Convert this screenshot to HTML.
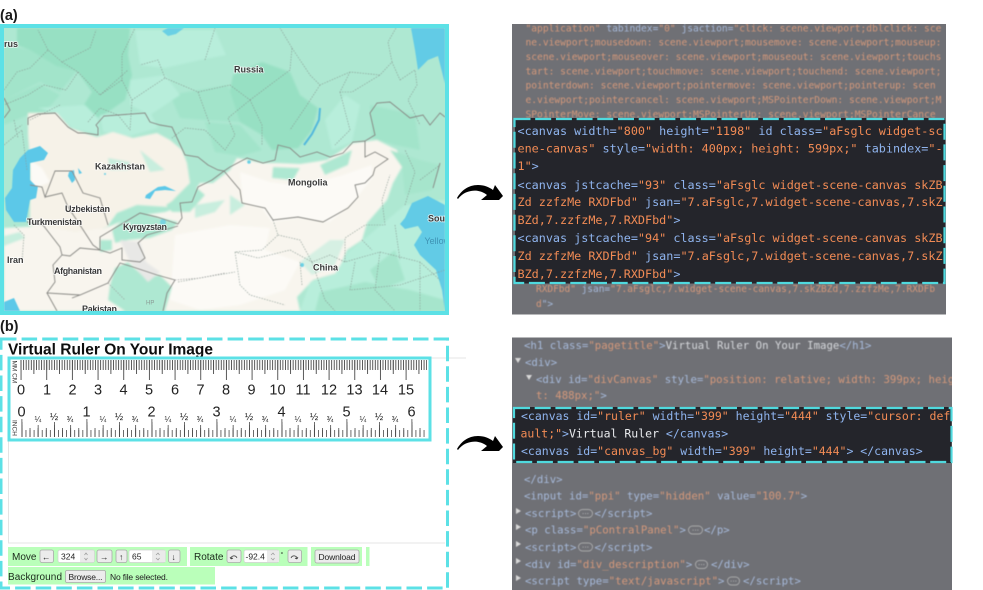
<!DOCTYPE html>
<html><head><meta charset="utf-8"><style>
html,body{margin:0;padding:0;background:#fff;width:983px;height:590px;overflow:hidden}
svg{display:block;position:absolute;left:0;top:0}
text{white-space:pre}
.m{font:bold 9px "Liberation Sans",sans-serif;fill:#3a3a3a;stroke:#fff;stroke-width:1.6px;paint-order:stroke;stroke-opacity:.75}
.d{font-family:"DejaVu Sans Mono","Liberation Mono",monospace;font-size:11.78px;fill:#f28b54}
.e{font-family:"DejaVu Sans Mono","Liberation Mono",monospace;font-size:11.5px;fill:#f28b54}
.f{font-family:"DejaVu Sans Mono","Liberation Mono",monospace;font-size:9.6px;fill:#d4987a}
.g{font-family:"DejaVu Sans Mono","Liberation Mono",monospace;font-size:10.7px;fill:#d4987a}
.b{fill:#8fb4ee}.c{fill:#a6b9da}.w{fill:#e8eaed}.h{fill:#d6d8dc}
.r{font:14.5px "Liberation Sans",sans-serif;fill:#222;text-anchor:middle}
.i{font:14.5px "Liberation Sans",sans-serif;fill:#222;text-anchor:middle}
.u{font:8px "Liberation Sans",sans-serif;fill:#222;text-anchor:middle}
.t{font:10px "Liberation Sans",sans-serif;fill:#1c2a1c}
.s{font:8.5px "Liberation Sans",sans-serif;fill:#222}
.bt{fill:#ececec;stroke:#a9a9a9;stroke-width:.8}
.ip{fill:#fff;stroke:#cfcfcf;stroke-width:.7}
.sp{fill:#eaeaea}
</style></head><body>
<svg width="983" height="590" viewBox="0 0 983 590" xmlns="http://www.w3.org/2000/svg">
<defs><clipPath id="mc"><rect x="4" y="28" width="441" height="283"/></clipPath>
<clipPath id="pb"><rect x="512" y="337" width="440" height="253"/></clipPath>
<clipPath id="pa"><rect x="512" y="24" width="434" height="291"/></clipPath>
<filter id="bl" filterUnits="userSpaceOnUse" x="0" y="0" width="983" height="590"><feGaussianBlur stdDeviation="0.35"/></filter>
<filter id="bn" filterUnits="userSpaceOnUse" x="0" y="0" width="983" height="590"><feGaussianBlur stdDeviation="0.5"/></filter>
<filter id="bm" filterUnits="userSpaceOnUse" x="0" y="0" width="983" height="590"><feGaussianBlur stdDeviation="1.1"/></filter></defs>
<rect width="983" height="590" fill="#fff"/>

<text x="0" y="20" font-family="Liberation Sans,sans-serif" font-weight="bold" font-size="14.5" fill="#1a1a1a">(a)</text>
<text x="0" y="331" font-family="Liberation Sans,sans-serif" font-weight="bold" font-size="14.5" fill="#1a1a1a">(b)</text>

<!-- MAP -->
<g clip-path="url(#mc)">
<rect x="4" y="28" width="441" height="283" fill="#aee8d2"/>
<g filter="url(#bm)">
<!-- north shading -->
<path fill="#97e0c3" d="M17 28H130L128 55 132 75 125 100 108 112 84 125 82 108 92 92 78 72 56 66 30 50 17 45Z"/>
<path fill="#a2e4ca" d="M4 45 30 50 56 66 76 72 60 92 40 82 20 92 4 100Z"/>
<path fill="#97e0c3" d="M233 75 262 62 290 72 300 95 318 108 312 130 298 148 272 150 262 135 240 122 228 100Z"/>
<path fill="#a2e4ca" d="M205 122 240 125 262 150 240 156 215 152Z"/>
<path fill="#a2e4ca" d="M170 95 228 85 240 122 205 120 180 118Z"/>
<path fill="#a2e4ca" d="M4 100 40 84 60 95 45 112 28 115 4 125Z"/>
<path fill="#b8eedb" d="M135 30 215 30 226 55 200 60 165 68 140 65Z"/>
<path fill="#b8eedb" d="M130 80 165 75 180 95 150 115 130 105Z"/>
<path fill="#a2e4ca" d="M370 105 415 115 420 150 395 145 372 138Z"/>
<path fill="#b8eedb" d="M38 108 85 105 98 118 100 135 72 128 57 113Z"/>
<path fill="#b8eedb" d="M100 115 150 112 158 128 130 136 103 132Z"/>
<path fill="#b8eedb" d="M325 120 345 95 360 105 352 142 332 150Z"/>
<!-- cream: Kazakhstan + south + China/Mongolia -->
<path fill="#f6f2e8" d="M28 113 57 113 70 128 97 137 113 132 133 138 157 133 170 140 182 150 187 163 190 183 173 200 167 207 137 205 117 213 107 227 80 235 50 228 30 226 30 160 28 135Z"/>
<path fill="#f8f5ee" d="M4 228 40 226 75 232 105 228 135 216 165 212 185 205 200 183 213 183 230 170 237 158 263 163 277 163 300 164 327 160 353 143 377 140 397 150 402 167 393 183 387 200 367 223 362 240 347 250 337 273 313 280 297 297 300 311H4Z"/>
<path fill="#fcfaf6" d="M240 172 270 182 300 186 340 176 372 165 372 178 355 200 330 222 298 218 272 222 262 208 243 202Z"/>
<path fill="#fcfaf6" d="M30 160 42 168 50 182 32 190Z"/>
<path fill="#fcfaf6" d="M175 235 230 225 270 228 265 250 300 262 285 290 240 305 200 310 170 300Z"/>
<!-- green streaks inside cream -->
<path fill="#aee8d2" d="M166 205 186 192 197 188 205 195 190 212 172 212Z"/>
<path fill="#aee8d2" d="M112 230 125 218 145 214 178 222 172 230 150 238 128 240 115 243Z"/>
<path fill="#aee8d2" d="M100 240 112 240 112 250 100 252Z"/>
<path fill="#aee8d2" d="M115 268 128 262 145 278 160 275 172 287 165 311H125L108 300 110 285Z"/>
<path fill="#e8e8e6" d="M120 240 140 242 146 262 160 272 148 282 130 262Z"/>
<path fill="#aee8d2" d="M273 167 300 168 293 180 272 178Z"/>
<path fill="#aee8d2" d="M320 165 352 150 348 165 325 175Z"/>
<path fill="#aee8d2" d="M205 165 225 170 212 178 200 182 190 170 188 155Z"/>
<path fill="#c8eede" d="M195 205 225 200 215 212 195 218Z"/>
<path fill="#c8eede" d="M230 195 245 205 230 215Z"/>
<path fill="#c8eede" d="M140 150 165 170 150 172Z"/>
<path fill="#c8eede" d="M108 158 130 162 128 170 110 170Z"/>
<path fill="#c8eede" d="M300 262 330 240 345 240 335 265 312 275Z" opacity=".7"/>
<path fill="#c8eede" d="M4 236 20 232 25 238 4 246Z"/>
<!-- SE -->
<path fill="#b8eedb" d="M362 241 405 205 445 200 445 311 300 311 310 282 335 274 348 252Z"/>
<path fill="#a6e5cc" d="M320 292 365 282 410 290 445 300 445 311H315Z"/>
<path fill="#a6e5cc" d="M390 150 420 160 440 165 432 190 405 195 402 167Z"/>
<path fill="#a6e5cc" d="M370 270 395 250 405 280 380 290Z"/>
</g>
<g filter="url(#bn)">
<!-- water -->
<path fill="#62cbe6" d="M411 28H445V84L438 56 428 60 418 70 415 50Z"/>
<path fill="#6ad0e4" d="M168 28H184L176 34 168 36 162 31Z"/>
<path fill="#62cbe6" d="M445 205 428 196 412 203 405 218 400 224 405 229 418 226 422 232 414 245 420 255 436 270 442 290 445 311Z"/>
<path fill="#5cc8e8" d="M28 150 40 146 48 153 44 160 30 163 30 180 36 186 30 200 26 222 14 222 6 210 5 198 12 188 13 170 20 158Z"/>
<path fill="#5cc8e8" d="M31 186 38 186 36 198 30 200Z"/>
<path fill="#5cc8e8" d="M146 195 158 187 165 186 176 191 165 190 155 191 150 199 145 198Z"/>
<path fill="#5cc8e8" d="M69 172 74 170 75 180 72 183 68 176Z"/>
<path fill="#5cc8e8" d="M78 168 82 173 79 174Z"/>
<path fill="none" stroke="#52b8dc" stroke-width="2" d="M320 108 319 120 312 134 304 145"/>
<path fill="#5cc8e8" d="M4 302 14 298 20 311H4Z"/>
<circle cx="249" cy="162" r="1.800" fill="#6ad0e4"/><circle cx="302" cy="265" r="2" fill="#6ad0e4"/>
<circle cx="105" cy="174" r="1" fill="#6ad0e4"/><circle cx="163" cy="222" r="3" fill="#6ad0e4" opacity=".8"/>
<!-- dotted admin -->
<g fill="none" stroke="#86968f" stroke-width=".6" stroke-dasharray="1.500 1.200">
<path d="M4 90 17 72 30 68 48 50 62 62 90 48 96 30M48 50 38 30M62 62 78 72 66 90 44 85 28 95 4 105M78 72 100 95 122 80 122 55 135 28M100 95 128 70M122 80 132 100 130 130 118 115 100 108 88 122M60 105 30 120M14 120 18 138M132 100 165 78 198 92 230 85 250 100 228 118 235 135 225 150 205 130 185 128 172 138M198 92 210 125M205 60 215 28M165 78 158 60 140 65M250 100 290 70 292 48 280 28M292 48 310 75 320 85 350 72 380 75 392 62 388 42 396 28M350 72 340 92 352 92 380 75M320 85 305 108 290 130M340 92 350 130 335 145M400 80 415 70 417 85 408 100 420 125M392 62 400 80M250 100 262 125 262 145"/>
<path d="M273 220 278 235 262 250 235 252 258 258 290 250 312 262 330 255 345 262 380 252 420 262 440 280M278 235 300 240 312 262M345 262 345 238 365 225 385 225 382 200 390 175M235 252 240 285 250 295 285 305M178 282 200 278 235 272M312 262 325 300 335 311M380 252 375 290 395 311M420 262 420 311M362 240 372 250M355 262 350 290 400 285 445 270M405 205 415 172 405 150M420 180 440 165M395 225 400 260M300 262 302 285"/>
<path d="M4 145 22 130 27 170M15 130 22 125M14 225 24 235 22 262"/>
</g>
<!-- borders -->
<g fill="none" stroke="#868682" stroke-width=".9">
<path d="M4 98 10 110 4 118M28 125 28 118 38 114 55 113 68 127 78 133 85 133 98 135 98 128 96 125 104 116 145 113 150 122 160 125 172 127 178 140 185 155 198 157 208 165 218 170 224 171 212 180 198 187 192 202 180 203 182 218 178 224 157 217 140 213 115 228 100 237 100 250 110 253 122 248 122 260 140 262 145 258 138 243 147 235 178 226"/>
<path d="M224 171 230 167 247 158 263 163 275 160 278 145 290 148 300 157 317 152 330 157 343 153 353 142 365 141 365 157 375 152 388 159 375 168 373 175 365 183 355 185 358 197 348 208 323 222 298 217 273 220 265 208 242 203 240 190Z"/>
<path d="M365 141 375 135 370 113 377 103 390 102 410 118 423 115 430 125 440 113 445 117M440 163 433 188"/>
<path d="M30 185 42 187 45 197 55 171 72 171 83 193 100 198 108 225M45 197 62 193 68 207 78 222 93 245 100 250 80 248 70 256 62 255 60 247 43 225 27 222M62 255 53 265 55 282 47 293 80 295 108 283 120 263 133 267 157 275 175 280 167 293 163 311M47 293 57 311M80 295 72 298"/>
</g>
<g fill="none" stroke="#9a9a9a" stroke-width=".6" stroke-dasharray="1.500 1.200"><path d="M175 280 200 278 225 273M108 283 125 300"/></g>
</g>
<!-- labels -->
<text class="m" x="234" y="72.500">Russia</text>
<text class="m" x="4" y="47">rus</text>
<text class="m" x="95" y="169.500">Kazakhstan</text>
<text class="m" x="288" y="185.500">Mongolia</text>
<text class="m" x="65" y="212" textLength="45">Uzbekistan</text>
<text class="m" x="27" y="225" textLength="55">Turkmenistan</text>
<text class="m" x="123" y="230" textLength="44">Kyrgyzstan</text>
<text class="m" x="428" y="221.500">South Korea</text>
<text class="m" style="fill:#3f93b4;stroke:none;font-weight:normal" x="424.500" y="244">Yellow Sea</text>
<text class="m" x="7" y="263">Iran</text>
<text class="m" x="54" y="274" textLength="48">Afghanistan</text>
<text class="m" x="313" y="270.500">China</text>
<text class="m" x="82" y="312" textLength="35">Pakistan</text>
<text class="m" style="fill:#8a9a94;stroke:none;font-size:6px;font-weight:normal" x="146" y="304.500">HP</text>
</g>
<rect x="2" y="26" width="445" height="287" fill="none" stroke="#5ce1e6" stroke-width="4"/>

<!-- ARROWS -->
<path fill="#000" d="M457 198C461 191 468 185 478 185 484 185 489 187 493 190L495 185 503 196 499 200 481 200 487 195C482 191 476 190 471 191 465 192 461 195 458 199Z"/>
<path fill="#000" transform="translate(0,251)" d="M457 198C461 191 468 185 478 185 484 185 489 187 493 190L495 185 503 196 499 200 481 200 487 195C482 191 476 190 471 191 465 192 461 195 458 199Z"/>

<!-- RIGHT PANEL A -->
<rect x="512" y="24" width="434" height="290.500" fill="#6f7075"/>
<g filter="url(#bn)" clip-path="url(#pa)">
<text class="f" x="525.500" y="31.500"><tspan>"application"</tspan><tspan class="c"> tabindex=</tspan>"0"<tspan class="c"> jsaction=</tspan>"click: scene.viewport;dblclick: sce</text>
<text class="f" x="525.500" y="45.600">ne.viewport;mousedown: scene.viewport;mousemove: scene.viewport;mouseup:</text>
<text class="f" x="525.500" y="60">scene.viewport;mouseover: scene.viewport;mouseout: scene.viewport;touchs</text>
<text class="f" x="525.500" y="74.400">tart: scene.viewport;touchmove: scene.viewport;touchend: scene.viewport;</text>
<text class="f" x="525.500" y="88.600">pointerdown: scene.viewport;pointermove: scene.viewport;pointerup: scen</text>
<text class="f" x="525.500" y="103.200">e.viewport;pointercancel: scene.viewport;MSPointerDown: scene.viewport;M</text>
<text class="f" x="525.500" y="117.300">SPointerMove: scene.viewport;MSPointerUp: scene.viewport;MSPointerCance</text>
<text class="f" style="font-size:9.48px" x="536" y="292"><tspan>RXDFbd"</tspan><tspan class="c"> jsan=</tspan>"7.aFsglc,7.widget-scene-canvas,7.skZBZd,7.zzfzMe,7.RXDFb</text>
<text class="f" style="font-size:9.48px" x="536" y="307">d<tspan class="c">"&gt;</tspan></text>
</g>
<rect x="515" y="118" width="430" height="165.500" fill="#24252b"/>
<g filter="url(#bl)">
<text class="d" x="517.500" y="135"><tspan class="b">&lt;canvas width=</tspan>"800"<tspan class="b"> height=</tspan>"1198"<tspan class="b"> id class=</tspan>"aFsglc widget-sc</text>
<text class="d" x="517.500" y="152.700">ene-canvas"<tspan class="b"> style=</tspan>"width: 400px; height: 599px;"<tspan class="b"> tabindex=</tspan>"-</text>
<text class="d" x="517.500" y="170">1"<tspan class="b">&gt;</tspan></text>
<text class="d" x="517.500" y="189"><tspan class="b">&lt;canvas jstcache=</tspan>"93"<tspan class="b"> class=</tspan>"aFsglc widget-scene-canvas skZB</text>
<text class="d" x="517.500" y="206.200">Zd zzfzMe RXDFbd"<tspan class="b"> jsan=</tspan>"7.aFsglc,7.widget-scene-canvas,7.skZ</text>
<text class="d" x="517.500" y="224">BZd,7.zzfzMe,7.RXDFbd"<tspan class="b">&gt;</tspan></text>
<text class="d" x="517.500" y="242.200"><tspan class="b">&lt;canvas jstcache=</tspan>"94"<tspan class="b"> class=</tspan>"aFsglc widget-scene-canvas skZB</text>
<text class="d" x="517.500" y="260">Zd zzfzMe RXDFbd"<tspan class="b"> jsan=</tspan>"7.aFsglc,7.widget-scene-canvas,7.skZ</text>
<text class="d" x="517.500" y="278">BZd,7.zzfzMe,7.RXDFbd"<tspan class="b">&gt;</tspan></text>
</g>
<rect x="514.500" y="119" width="430" height="164" fill="none" stroke="#4fd9de" stroke-width="2.200" stroke-dasharray="16 4.700"/>

<!-- RIGHT PANEL B -->
<rect x="512" y="337.500" width="440" height="252.500" fill="#6f7075"/>
<g clip-path="url(#pb)"><g filter="url(#bn)">
<text class="g" x="524" y="348.800"><tspan class="c">&lt;h1 class=</tspan>"pagetitle"<tspan class="c">&gt;</tspan><tspan class="h">Virtual Ruler On Your Image</tspan><tspan class="c">&lt;/h1&gt;</tspan></text>
<path d="M515 358H521L518 363Z" fill="#d8d8d8"/>
<text class="g c" x="525" y="366"><tspan class="c">&lt;div&gt;</tspan></text>
<path d="M526 375H532L529 380Z" fill="#d8d8d8"/>
<text class="g" x="536" y="383"><tspan class="c">&lt;div id=</tspan>"divCanvas"<tspan class="c"> style=</tspan>"position: relative; width: 399px; heig</text>
<text class="g" x="536" y="399.200">t: 488px;"<tspan class="c">&gt;</tspan></text>
<text class="g" x="524" y="483.200"><tspan class="c">&lt;/div&gt;</tspan></text>
<text class="g" x="524" y="499.500"><tspan class="c">&lt;input id=</tspan>"ppi"<tspan class="c"> type=</tspan>"hidden"<tspan class="c"> value=</tspan>"100.7"<tspan class="c">&gt;</tspan></text>
<path d="M516 508V514L521 511Z" fill="#d8d8d8"/>
<text class="g" x="525" y="517.200"><tspan class="c">&lt;script&gt;</tspan></text>
<rect x="578.500" y="509.500" width="14" height="8" rx="4" fill="none" stroke="#bbb" stroke-width=".7"/><text x="585.500" y="515.500" text-anchor="middle" font-size="7" fill="#ddd" font-family="Liberation Sans,sans-serif">···</text>
<text class="g" x="594.500" y="517.200"><tspan class="c">&lt;/script&gt;</tspan></text>
<path d="M516 524V530L521 527Z" fill="#d8d8d8"/>
<text class="g" x="525" y="533.600"><tspan class="c">&lt;p class=</tspan>"pContralPanel"<tspan class="c">&gt;</tspan></text>
<rect x="688.500" y="526" width="14" height="8" rx="4" fill="none" stroke="#bbb" stroke-width=".7"/><text x="695.500" y="532" text-anchor="middle" font-size="7" fill="#ddd" font-family="Liberation Sans,sans-serif">···</text>
<text class="g" x="704" y="533.600"><tspan class="c">&lt;/p&gt;</tspan></text>
<path d="M516 541V547L521 544Z" fill="#d8d8d8"/>
<text class="g" x="525" y="551"><tspan class="c">&lt;script&gt;</tspan></text>
<rect x="578.500" y="543" width="14" height="8" rx="4" fill="none" stroke="#bbb" stroke-width=".7"/><text x="585.500" y="549" text-anchor="middle" font-size="7" fill="#ddd" font-family="Liberation Sans,sans-serif">···</text>
<text class="g" x="594.500" y="551"><tspan class="c">&lt;/script&gt;</tspan></text>
<path d="M516 558V564L521 561Z" fill="#d8d8d8"/>
<text class="g" x="525" y="568.200"><tspan class="c">&lt;div id=</tspan>"div_description"<tspan class="c">&gt;</tspan></text>
<rect x="695.500" y="560.500" width="12" height="8" rx="4" fill="none" stroke="#bbb" stroke-width=".7"/><text x="701.500" y="566.500" text-anchor="middle" font-size="7" fill="#ddd" font-family="Liberation Sans,sans-serif">···</text>
<text class="g" x="711" y="568.200"><tspan class="c">&lt;/div&gt;</tspan></text>
<path d="M516 575V581L521 578Z" fill="#d8d8d8"/>
<text class="g" x="525" y="584.500"><tspan class="c">&lt;script type=</tspan>"text/javascript"<tspan class="c">&gt;</tspan></text>
<rect x="727.500" y="577" width="12" height="8" rx="4" fill="none" stroke="#bbb" stroke-width=".7"/><text x="733.500" y="583" text-anchor="middle" font-size="7" fill="#ddd" font-family="Liberation Sans,sans-serif">···</text>
<text class="g" x="743" y="584.500"><tspan class="c">&lt;/script&gt;</tspan></text>
</g></g>
<rect x="513" y="407" width="438.500" height="56" fill="#24252b"/>
<g filter="url(#bl)">
<text class="e" x="521" y="420"><tspan class="b">&lt;canvas id=</tspan>"ruler"<tspan class="b"> width=</tspan>"399"<tspan class="b"> height=</tspan>"444"<tspan class="b"> style=</tspan>"cursor: def</text>
<text class="e" x="520.500" y="437.300">ault;"<tspan class="b">&gt;</tspan><tspan class="w">Virtual Ruler </tspan><tspan class="b">&lt;/canvas&gt;</tspan></text>
<text class="e" x="521" y="455"><tspan class="b">&lt;canvas id=</tspan>"canvas_bg"<tspan class="b"> width=</tspan>"399"<tspan class="b"> height=</tspan>"444"<tspan class="b">&gt; &lt;/canvas&gt;</tspan></text>
</g>
<rect x="514" y="408" width="437.500" height="54" fill="none" stroke="#4fd9de" stroke-width="2.200" stroke-dasharray="16 4.700"/>

<!-- PANEL B LEFT -->
<path d="M8.500 441V543H445M431 358H466" fill="none" stroke="#e4e4e4" stroke-width="1"/>
<g filter="url(#bl)">
<text x="8" y="354.500" font-family="Liberation Sans,sans-serif" font-weight="bold" font-size="15.500" textLength="205" fill="#111">Virtual Ruler On Your Image</text>
</g>
<rect x="9" y="358" width="421" height="82" fill="#fff" stroke="#5ce1e6" stroke-width="3"/>
<g filter="url(#bl)" stroke="#4a4a4a" fill="none">
<line x1="20.600" x2="427" y1="365" y2="365" stroke-width="10" stroke-dasharray=".9 1.667"/>
<line x1="33.430" x2="427" y1="367" y2="367" stroke-width="14" stroke-dasharray=".9 24.770"/>
<line x1="20.600" x2="427" y1="370" y2="370" stroke-width="20" stroke-dasharray=".9 24.770"/>
<line x1="21.500" x2="427" y1="433.500" y2="433.500" stroke-width="7" stroke-dasharray=".8 3.262"/>
<line x1="21.500" x2="427" y1="432.500" y2="432.500" stroke-width="9" stroke-dasharray=".8 7.325"/>
<line x1="21.500" x2="427" y1="431" y2="431" stroke-width="12" stroke-dasharray=".8 15.450"/>
<line x1="21.500" x2="427" y1="429.500" y2="429.500" stroke-width="15" stroke-dasharray=".8 31.700"/>
<line x1="21.500" x2="427" y1="428" y2="428" stroke-width="18" stroke-dasharray=".8 64.200"/>
</g>
<g filter="url(#bl)">
<text class="r" x="21" y="394.500">0</text><text class="r" x="47" y="394.500">1</text><text class="r" x="72.500" y="394.500">2</text><text class="r" x="98" y="394.500">3</text><text class="r" x="123.500" y="394.500">4</text><text class="r" x="149" y="394.500">5</text><text class="r" x="175" y="394.500">6</text><text class="r" x="200.500" y="394.500">7</text><text class="r" x="226" y="394.500">8</text><text class="r" x="251.500" y="394.500">9</text><text class="r" x="277.500" y="394.500">10</text><text class="r" x="303" y="394.500">11</text><text class="r" x="329" y="394.500">12</text><text class="r" x="354.500" y="394.500">13</text><text class="r" x="380" y="394.500">14</text><text class="r" x="406" y="394.500">15</text>
<text class="i" x="21.500" y="416.500">0</text><text class="i" x="86.500" y="416.500">1</text><text class="i" x="151.500" y="416.500">2</text><text class="i" x="216.500" y="416.500">3</text><text class="i" x="281.500" y="416.500">4</text><text class="i" x="346.500" y="416.500">5</text><text class="i" x="411.500" y="416.500">6</text>
<text class="u" x="38" y="422">¼</text><text class="u" x="54" y="420" style="font-size:10px">½</text><text class="u" x="70" y="422">¾</text>
<text class="u" x="103" y="422">¼</text><text class="u" x="119" y="420" style="font-size:10px">½</text><text class="u" x="135" y="422">¾</text>
<text class="u" x="168" y="422">¼</text><text class="u" x="184" y="420" style="font-size:10px">½</text><text class="u" x="200" y="422">¾</text>
<text class="u" x="233" y="422">¼</text><text class="u" x="249" y="420" style="font-size:10px">½</text><text class="u" x="265" y="422">¾</text>
<text class="u" x="298" y="422">¼</text><text class="u" x="314" y="420" style="font-size:10px">½</text><text class="u" x="330" y="422">¾</text>
<text class="u" x="363" y="422">¼</text><text class="u" x="379" y="420" style="font-size:10px">½</text><text class="u" x="395" y="422">¾</text>
<text transform="translate(12.500,360.500) rotate(90)" font-family="Liberation Sans,sans-serif" font-size="6.500" fill="#333">MM CM</text>
<text transform="translate(12.500,420) rotate(90)" font-family="Liberation Sans,sans-serif" font-size="6.500" fill="#333">INCH</text>
</g>

<!-- CONTROLS -->
<g fill="#baffba">
<rect x="8" y="547" width="179" height="19"/><rect x="190" y="547" width="117.500" height="19"/><rect x="311" y="547" width="51" height="19"/><rect x="366" y="547" width="3.500" height="19"/><rect x="8" y="567" width="207" height="17.500"/>
</g>
<g filter="url(#bl)">
<text class="t" x="12" y="560">Move</text>
<rect class="bt" x="40" y="550" width="13.500" height="12.500" rx="2"/><text class="s" x="42" y="560">←</text>
<rect class="ip" x="58" y="550" width="36.500" height="12.500" rx="2"/><rect class="sp" x="80" y="550.500" width="14" height="11.500"/><text class="s" x="61" y="559.500">324</text><path d="M84.500 555 86 553 87.500 555M84.500 558 86 560 87.500 558" fill="none" stroke="#999" stroke-width=".7"/>
<rect class="bt" x="97" y="550" width="15" height="12.500" rx="2"/><text class="s" x="100" y="560">→</text>
<rect class="bt" x="116" y="550" width="11" height="12.500" rx="2"/><text class="s" x="119" y="560">↑</text>
<rect class="ip" x="129" y="550" width="36.500" height="12.500" rx="2"/><rect class="sp" x="152" y="550.500" width="13.500" height="11.500"/><text class="s" x="132" y="559.500">65</text><path d="M156 555 158 553 159.500 555M156 558 158 560 159.500 558" fill="none" stroke="#999" stroke-width=".7"/>
<rect class="bt" x="168.500" y="550" width="11.500" height="12.500" rx="2"/><text class="s" x="171.500" y="560">↓</text>
<text class="t" x="194" y="560">Rotate</text>
<rect class="bt" x="227" y="550" width="14" height="12.500" rx="2"/><path d="M231 559C231 555 236 555 237 558M231 559 230 557M231 559 233 558" fill="none" stroke="#333" stroke-width=".7"/>
<rect class="ip" x="244" y="550" width="35" height="12.500" rx="2"/><rect class="sp" x="267" y="550.500" width="12" height="11.500"/><text class="s" x="245.500" y="559.500">-92.4</text><path d="M271 555 273 553 274.500 555M271 558 273 560 274.500 558" fill="none" stroke="#999" stroke-width=".7"/>
<text class="s" x="280.500" y="557" style="font-size:7px">°</text>
<rect class="bt" x="288" y="550" width="13.500" height="12.500" rx="2"/><path d="M291 558C292 555 297 555 297 559M297 559 295 558M297 559 298 557" fill="none" stroke="#333" stroke-width=".7"/>
<rect class="bt" x="315" y="550" width="44" height="13" rx="2"/><text class="s" x="318.500" y="560" textLength="37">Download</text>
<text class="t" x="8" y="580" textLength="54">Background</text>
<rect class="bt" x="65.500" y="570.500" width="40" height="12" rx="1.500"/><text class="s" x="68.500" y="580" textLength="34">Browse...</text>
<text class="s" x="110" y="580" textLength="58">No file selected.</text>
</g>

<!-- dashed frame -->
<rect x="1" y="339" width="446.500" height="249" fill="none" stroke="#5ce1e6" stroke-width="3" stroke-dasharray="15.500 5.100"/>
</svg>
</body></html>
